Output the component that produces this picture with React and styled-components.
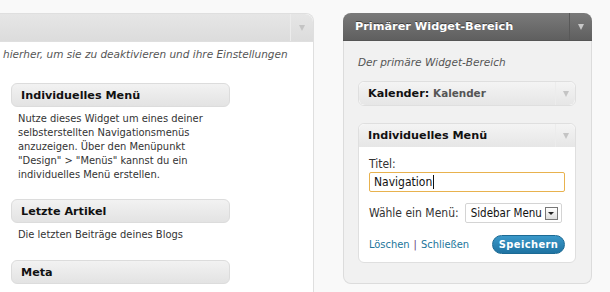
import { styled, createGlobalStyle } from "styled-components";

const GlobalStyle = createGlobalStyle`
    html, body {
        margin: 0;
        padding: 0;
        background: #f9f9f9;
        font-family: "DejaVu Sans Condensed", "DejaVu Sans", Verdana, sans-serif;
        color: #333;
    }
`;

const Page = styled.div`
    display: flex;
    align-items: flex-start;
    gap: 29px;
    padding-top: 13px;
    height: 279px;
    overflow: hidden;
`;

const LeftPanel = styled.div`
    width: 313px;
    height: 300px;
    background: #fff;
    border: 1px solid #dfdfdf;
    border-left: none;
    border-top-right-radius: 8px;
`;

const RightPanel = styled.div`
    width: 247px;
    background: #f1f1f1;
    border: 1px solid #dcdcdc;
    border-top: none;
    border-radius: 8px;
    padding-bottom: 20px;
`;

const PanelHeader = styled.div`
    display: flex;
    align-items: center;
    height: 27px;
    border-top-right-radius: 8px;
    border-top-left-radius: ${({ $dark }) => ($dark ? "8px" : "0")};
    margin: ${({ $dark }) => ($dark ? "0 -1px" : "0")};
    background: ${({ $dark }) =>
        $dark
            ? "linear-gradient(#7a7a7a, #5f5f5f)"
            : "linear-gradient(#e6e6e6, #dcdcdc)"};
    border-bottom: 1px solid ${({ $dark }) => ($dark ? "#555" : "#dfdfdf")};
`;

const PanelTitle = styled.div`
    flex: 1;
    padding-left: 12px;
    font-family: "DejaVu Sans", Verdana, sans-serif;
    font-size: 11.3px;
    font-weight: bold;
    color: #fff;
    text-shadow: 0 -1px 0 #3f3f3f;
`;

const Toggle = styled.div`
    width: ${({ $small }) => ($small ? "19px" : "22px")};
    height: 100%;
    display: flex;
    align-items: center;
    justify-content: center;
    border-left: 1px solid ${({ $dark }) => ($dark ? "#595959" : "#ececec")};
    margin-left: auto;
    &::after {
        content: "";
        border-left: 3.5px solid transparent;
        border-right: 3.5px solid transparent;
        border-top: 6px solid ${({ $dark }) => ($dark ? "#c8c8c8" : "#c4c4c4")};
    }
`;

const Description = styled.p`
    margin: 0;
    font-family: "DejaVu Sans", Verdana, sans-serif;
    font-size: 10.5px;
    font-style: italic;
    color: #555;
    white-space: nowrap;
    padding: ${({ $right }) => ($right ? "15px 0 0 14px" : "6px 0 0 3px")};
`;

const WidgetList = styled.div`
    display: flex;
    flex-direction: column;
    padding: 23px 0 0 11px;
`;

const Widget = styled.div`
    width: 219px;
    margin-bottom: ${({ $gap }) => $gap}px;
`;

const WidgetTop = styled.div`
    height: 24px;
    display: flex;
    align-items: center;
    padding-left: 9px;
    box-sizing: border-box;
    border: 1px solid #dcdcdc;
    border-radius: 6px;
    background: linear-gradient(#f2f2f2, #e3e3e3);
    font-family: "DejaVu Sans", Verdana, sans-serif;
    font-size: 11.2px;
    font-weight: bold;
    color: #111;
`;

const WidgetText = styled.p`
    margin: 0;
    padding: 5px 8px 0 7px;
    font-size: 11px;
    line-height: 14px;
    color: #333;
`;

const Area = styled.div`
    padding: 13px 15px 0 14px;
    display: flex;
    flex-direction: column;
    gap: 17px;
`;

const Card = styled.div`
    border: 1px solid #dfdfdf;
    border-radius: 6px;
    background: #fff;
    overflow: hidden;
`;

const CardTop = styled.div`
    display: flex;
    align-items: center;
    height: 23px;
    background: linear-gradient(#f4f4f4, #e6e6e6);
    border-radius: ${({ $open }) => ($open ? "6px 6px 0 0" : "6px")};
    padding-left: 9px;
    font-family: "DejaVu Sans", Verdana, sans-serif;
    font-size: 11.2px;
    font-weight: bold;
    color: #111;
`;

const CardName = styled.span`
    flex: 1;
`;

const SubName = styled.span`
    font-size: 10.4px;
    color: #555;
`;

const CardBody = styled.div`
    padding: 10px 10px 8px 10px;
    font-size: 12px;
    color: #333;
`;

const Label = styled.div`
    margin-bottom: 1px;
`;

const FakeInput = styled.div`
    display: flex;
    align-items: center;
    height: 20px;
    box-sizing: border-box;
    border: 1px solid #e8b24e;
    border-radius: 2px;
    padding-left: 4px;
    font-size: 12px;
    color: #111;
`;

const Caret = styled.span`
    width: 1px;
    height: 14px;
    background: #111;
    margin-left: 1px;
`;

const SelectRow = styled.div`
    display: flex;
    align-items: center;
    gap: 6px;
    margin-top: 11px;
`;

const FakeSelect = styled.div`
    display: flex;
    align-items: center;
    gap: 3px;
    height: 20px;
    box-sizing: border-box;
    border: 1px solid #d4d4d4;
    border-radius: 2px;
    padding: 0 3px 0 5px;
    font-size: 11.5px;
    color: #111;
    background: #fff;
`;

const SelectArrow = styled.span`
    width: 13px;
    height: 13px;
    box-sizing: border-box;
    border: 1px solid #777;
    background: linear-gradient(#fff, #ddd);
    display: flex;
    align-items: center;
    justify-content: center;
    &::after {
        content: "";
        border-left: 3px solid transparent;
        border-right: 3px solid transparent;
        border-top: 3px solid #222;
    }
`;

const Actions = styled.div`
    display: flex;
    align-items: center;
    margin-top: 12px;
    font-size: 11px;
`;

const Link = styled.a`
    color: #21759b;
    text-decoration: none;
`;

const Sep = styled.span`
    color: #664477;
    margin: 0 4px;
`;

const SaveButton = styled.button`
    margin-left: auto;
    height: 19px;
    width: 73px;
    padding: 0;
    border: 1px solid #1c6a94;
    border-radius: 10px;
    background: linear-gradient(#3a98c9, #1f73a2);
    color: #fff;
    font-family: inherit;
    font-size: 11px;
    font-weight: bold;
    letter-spacing: 0.4px;
`;

const leftWidgets = [
    {
        title: "Individuelles Menü",
        text: 'Nutze dieses Widget um eines deiner selbsterstellten Navigationsmenüs anzuzeigen. Über den Menüpunkt "Design" > "Menüs" kannst du ein individuelles Menü erstellen.',
        gap: 17,
    },
    { title: "Letzte Artikel", text: "Die letzten Beiträge deines Blogs", gap: 18 },
    { title: "Meta", text: "", gap: 0 },
];

export default function App() {
    return (
        <>
            <GlobalStyle />
            <Page>
                <LeftPanel>
                    <PanelHeader>
                        <Toggle />
                    </PanelHeader>
                    <Description>hierher, um sie zu deaktivieren und ihre Einstellungen</Description>
                    <WidgetList>
                        {leftWidgets.map((w) => (
                            <Widget key={w.title} $gap={w.gap}>
                                <WidgetTop>{w.title}</WidgetTop>
                                {w.text && <WidgetText>{w.text}</WidgetText>}
                            </Widget>
                        ))}
                    </WidgetList>
                </LeftPanel>
                <RightPanel>
                    <PanelHeader $dark>
                        <PanelTitle>Primärer Widget-Bereich</PanelTitle>
                        <Toggle $dark />
                    </PanelHeader>
                    <Description $right>Der primäre Widget-Bereich</Description>
                    <Area>
                        <Card>
                            <CardTop>
                                <CardName>
                                    Kalender: <SubName>Kalender</SubName>
                                </CardName>
                                <Toggle $small />
                            </CardTop>
                        </Card>
                        <Card>
                            <CardTop $open>
                                <CardName>Individuelles Menü</CardName>
                                <Toggle $small />
                            </CardTop>
                            <CardBody>
                                <Label>Titel:</Label>
                                <FakeInput>
                                    Navigation
                                    <Caret />
                                </FakeInput>
                                <SelectRow>
                                    Wähle ein Menü:
                                    <FakeSelect>
                                        Sidebar Menu
                                        <SelectArrow />
                                    </FakeSelect>
                                </SelectRow>
                                <Actions>
                                    <Link href="#">Löschen</Link>
                                    <Sep>|</Sep>
                                    <Link href="#">Schließen</Link>
                                    <SaveButton>Speichern</SaveButton>
                                </Actions>
                            </CardBody>
                        </Card>
                    </Area>
                </RightPanel>
            </Page>
        </>
    );
}
